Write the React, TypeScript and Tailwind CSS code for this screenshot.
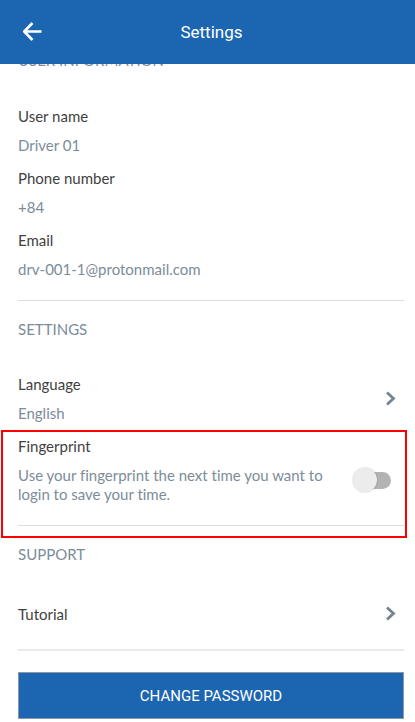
import type { ReactNode } from "react";

function Field({ label, value }: { label: string; value: string }) {
  return (
    <div className="flex flex-col gap-[9px]">
      <dt className="text-[#3f3f3f]">{label}</dt>
      <dd>{value}</dd>
    </div>
  );
}

function SectionTitle({ children }: { children: ReactNode }) {
  return <h2>{children}</h2>;
}

function Chevron() {
  return (
    <svg className="mr-2 h-4 w-3 shrink-0" viewBox="0 0 12 16" fill="none" aria-hidden="true">
      <path d="M3 1.500 9.500 7.500 3 13.500" stroke="#738494" strokeWidth="2.8" />
    </svg>
  );
}

export default function App() {
  return (
    <div className="overflow-hidden bg-white font-['Lato',sans-serif] text-[15px] leading-5 text-[#7c8c99] [font-variant-ligatures:none]">
      <header className="relative z-10 grid h-16 grid-cols-[64px_1fr_64px] items-center bg-[#1c65b0] font-['Roboto',sans-serif] text-white">
        <button type="button" aria-label="Back" className="flex h-16 items-center pl-[22px]">
          <svg className="h-5 w-5" viewBox="0 0 20 20" fill="none" aria-hidden="true">
            <path d="M19.500 9.500H2M10.500 1 2.200 9.500 10.500 18" stroke="white" strokeWidth="2.6" strokeLinejoin="round" />
          </svg>
        </button>
        <h1 className="pl-2 text-center text-[17px] leading-6">Settings</h1>
      </header>

      <main className="pr-[11px] pb-1 pl-[18px]">
        <section className="-mt-3.5 border-b border-[#dcdcdc] pb-[21px]">
          <SectionTitle>USER INFORMATION</SectionTitle>
          <dl className="mt-9 flex flex-col gap-[13px]">
            <Field label="User name" value="Driver 01" />
            <Field label="Phone number" value="+84" />
            <Field label="Email" value="drv-001-1@protonmail.com" />
          </dl>
        </section>

        <section className="pt-[18px]">
          <SectionTitle>SETTINGS</SectionTitle>
          <button type="button" className="mt-[35px] flex w-full items-center justify-between text-left">
            <span className="flex flex-col gap-[9px]">
              <span className="text-[#3f3f3f]">Language</span>
              <span>English</span>
            </span>
            <Chevron />
          </button>
          <div className="relative mt-[13px] border-b border-[#dcdcdc] pb-[21px]">
            <div className="flex items-center justify-between">
              <div className="flex flex-col gap-2.5">
                <label htmlFor="fingerprint" className="text-[#3f3f3f]">Fingerprint</label>
                <p id="fingerprint-hint" className="max-w-[310px] leading-[19px]">
                  Use your fingerprint the next time you want to login to save your time.
                </p>
              </div>
              <input
                id="fingerprint"
                type="checkbox"
                role="switch"
                aria-describedby="fingerprint-hint"
                className="relative mt-5 mr-[13px] h-[17px] w-9 shrink-0 appearance-none rounded-full bg-[#b3b3b3] before:absolute before:-top-1 before:-left-0.5 before:size-6 before:rounded-full before:bg-[#ececec] before:shadow-[0_0_2px_rgba(0,0,0,0.25)] checked:before:left-4"
              />
            </div>
            <div className="pointer-events-none absolute -top-1.5 -right-[3px] -bottom-[13px] -left-[17px] border-2 border-[#fe0000]" />
          </div>
        </section>

        <section className="border-b-2 border-[#e9e9e9] pt-[18px] pb-[25px]">
          <SectionTitle>SUPPORT</SectionTitle>
          <button type="button" className="mt-10 flex w-full items-center justify-between text-left">
            <span className="text-[#3f3f3f]">Tutorial</span>
            <Chevron />
          </button>
        </section>

        <button
          type="button"
          className="mt-[21px] block h-[47px] w-full border border-[#8a98aa] bg-[#1c65b0] font-['Roboto',sans-serif] text-[15px] text-white"
        >
          CHANGE PASSWORD
        </button>
      </main>
    </div>
  );
}
